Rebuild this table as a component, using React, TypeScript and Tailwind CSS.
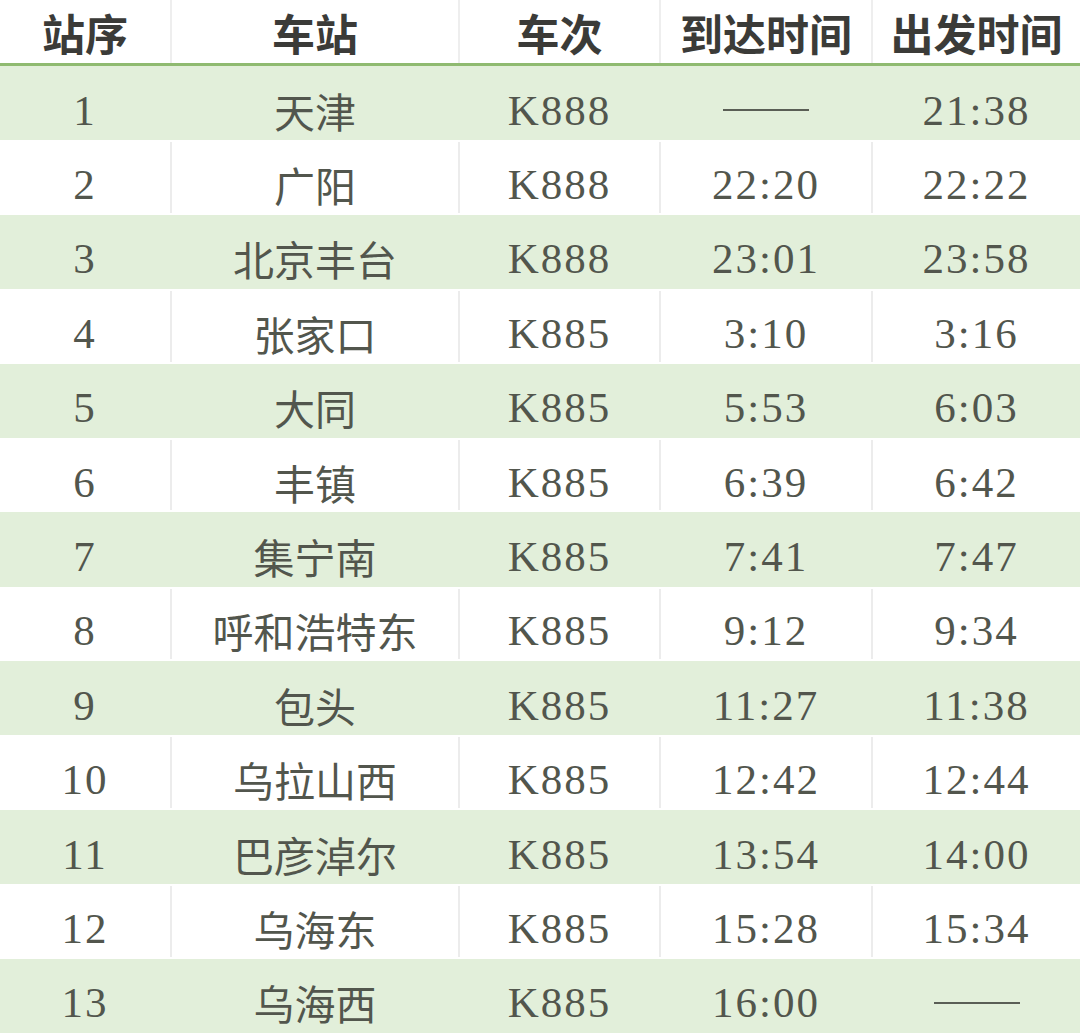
const rows = [
  ["1", "天津", "K888", "——", "21:38"],
  ["2", "广阳", "K888", "22:20", "22:22"],
  ["3", "北京丰台", "K888", "23:01", "23:58"],
  ["4", "张家口", "K885", "3:10", "3:16"],
  ["5", "大同", "K885", "5:53", "6:03"],
  ["6", "丰镇", "K885", "6:39", "6:42"],
  ["7", "集宁南", "K885", "7:41", "7:47"],
  ["8", "呼和浩特东", "K885", "9:12", "9:34"],
  ["9", "包头", "K885", "11:27", "11:38"],
  ["10", "乌拉山西", "K885", "12:42", "12:44"],
  ["11", "巴彦淖尔", "K885", "13:54", "14:00"],
  ["12", "乌海东", "K885", "15:28", "15:34"],
  ["13", "乌海西", "K885", "16:00", "——"],
];

const headers = ["站序", "车站", "车次", "到达时间", "出发时间"];

const cols = "grid grid-cols-[170px_288px_201px_212px_209px]";

const cjk = "font-['Noto_Sans_CJK_SC',sans-serif]";
const num = "font-['Liberation_Serif','Noto_Sans_CJK_SC',serif] tracking-[2px]";

export default function App() {
  return (
    <div className="w-[1080px] h-[1033px] overflow-hidden bg-white text-[#52564d]">
      <div className={`${cols} h-[63px] items-center`}>
        {headers.map((h, i) => (
          <div
            key={h}
            className={`h-full flex items-center justify-center pt-[2px] ${
              i > 0 ? "border-l-2 border-[#eeeeee]" : ""
            } ${cjk} text-[43px] font-bold text-[#3b3b38] leading-none`}
          >
            {h}
          </div>
        ))}
      </div>
      <div className="h-[3px] bg-[#8fba70]" />
      <div className="grid grid-rows-[repeat(13,1fr)] h-[967px]">
        {rows.map((r, idx) => (
          <div
            key={r[0]}
            className={`${cols} ${idx % 2 === 0 ? "bg-[#e2efda]" : "bg-white"}`}
          >
            {r.map((c, i) => (
              <div
                key={i}
                className={`flex items-center justify-center pt-[14px] ${
                  i > 0 ? (idx % 2 === 0 ? "border-l-2 border-[#e2efda]" : "border-l-2 border-[#ececec]") : ""
                } ${idx % 2 === 1 ? "my-[2px]" : ""} ${i === 1 ? `${cjk} text-[41px]` : `${num} text-[43px]`} leading-none`}
              >
                {c === "——" ? (
                  <span className="inline-block w-[86px] h-[2px] bg-[#5a5e55]" />
                ) : (
                  c
                )}
              </div>
            ))}
          </div>
        ))}
      </div>
    </div>
  );
}
